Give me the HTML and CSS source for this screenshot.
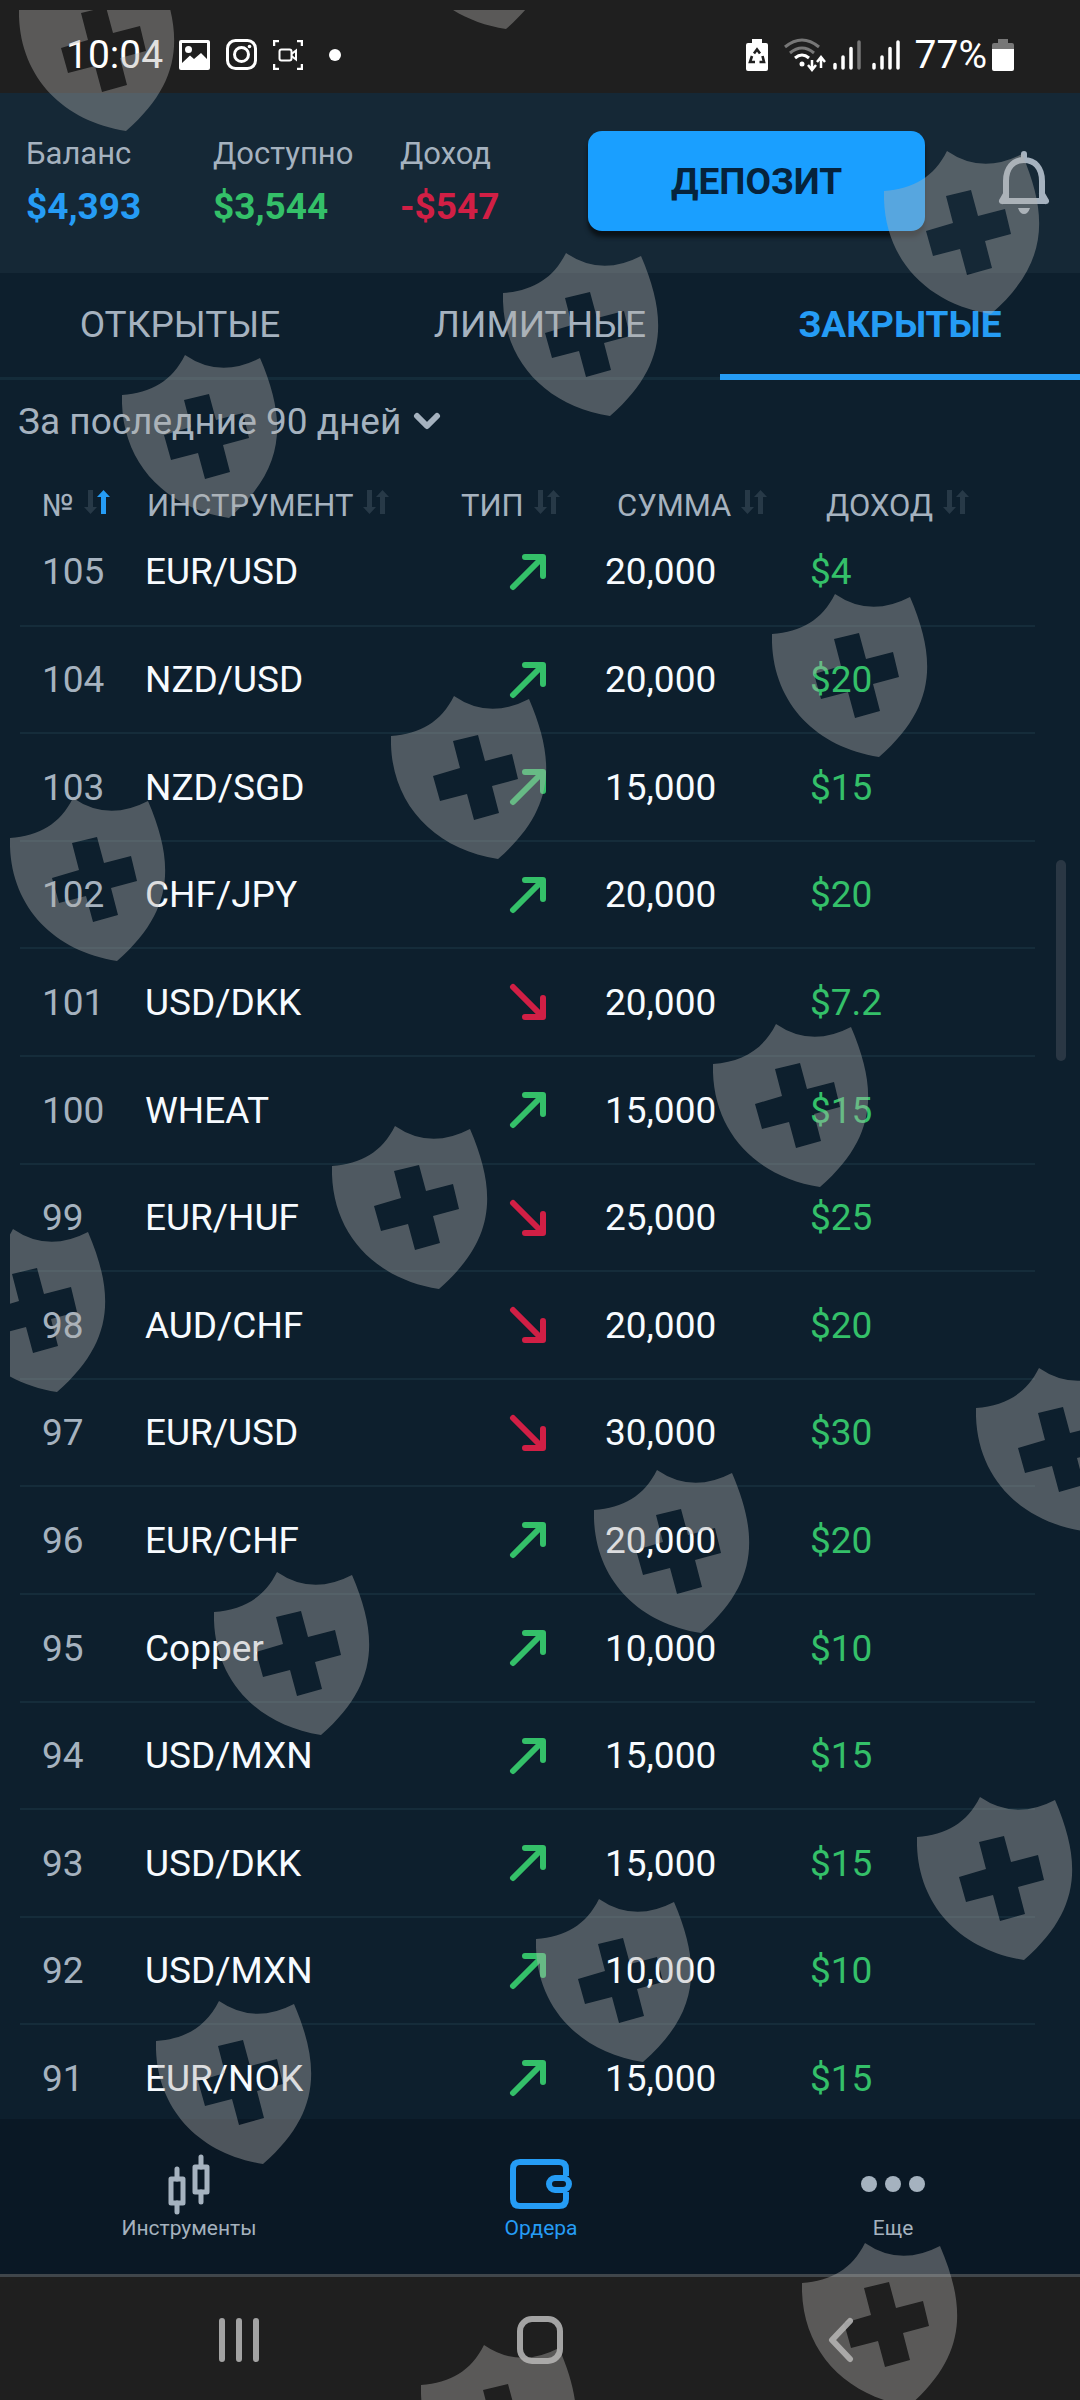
FILE: index.html
```html
<!DOCTYPE html>
<html lang="ru">
<head>
<meta charset="utf-8">
<meta name="viewport" content="width=device-width, initial-scale=1">
<title>Ордера</title>
<link rel="stylesheet" href="styles.css">
</head>
<body>
<svg class="defs" aria-hidden="true">
  <symbol id="up" viewBox="0 0 38 38"><path d="M4 34 33 5M16 4H34V23" fill="none" stroke="currentColor" stroke-width="6" stroke-linecap="round" stroke-linejoin="round"/></symbol>
  <symbol id="down" viewBox="0 0 38 38"><path d="M4 4 33 33M16 34H34V15" fill="none" stroke="currentColor" stroke-width="6" stroke-linecap="round" stroke-linejoin="round"/></symbol>
  <symbol id="sort" viewBox="0 0 28 26"><path class="sort-down" d="M5 1h5v17h4l-6.500 7L1 18h4z"/><path class="sort-up" d="M18 25h5V8h4l-6.500-7L14 8h4z"/></symbol>
  <symbol id="shield" viewBox="0 0 156 164"><path fill-rule="evenodd" d="M0 40C29 38 50 26 63 0Q98 24 138 3C165 66 164 113 107 163C42 153 -2 106 0 40ZM62 45 87 39 94 65 121 58 127 83 101 90 108 117 83 124 76 98 49 105 42 80 69 72Z"/></symbol>
</svg>
<div class="screen">
  <div class="status">
    <div class="status-left">
      <span class="clock">10:04</span>
      <svg width="31" height="30" viewBox="0 0 31 30"><path fill="#fff" fill-rule="evenodd" d="M2 0H29Q31 0 31 2V28Q31 30 29 30H2Q0 30 0 28V2Q0 0 2 0ZM3 23 11 15.500 15 19 22 13 28 19V3H3ZM9.500 6A3.500 3.500 0 1 1 9.500 13A3.500 3.500 0 1 1 9.500 6Z"/></svg>
      <svg width="31" height="31" viewBox="0 0 31 31" fill="none" stroke="#fff"><rect x="1.500" y="1.500" width="28" height="28" rx="8" stroke-width="3"/><circle cx="15.500" cy="15.500" r="7" stroke-width="3"/><circle cx="23.500" cy="7.500" r="1.800" fill="#fff" stroke="none"/></svg>
      <svg width="30" height="30" viewBox="0 0 30 30" fill="none" stroke="#fff" stroke-width="2.500"><path d="M1 6V1H6M24 1H29V6M29 24V29H24M6 29H1V24"/><rect x="6.500" y="9.500" width="12" height="11" rx="2" stroke-width="2"/><path d="M18.500 14 23 10.500V19.500L18.500 16" stroke-width="2"/></svg>
      <span class="dot"></span>
    </div>
    <div class="status-right">
      <svg width="24" height="34" viewBox="0 0 24 34"><path fill="#fff" d="M7 1H17V5H21Q23 5 23 7V31Q23 33 21 33H3Q1 33 1 31V7Q1 5 3 5H7Z"/><path d="M9 15.500 12 11.500 15 15.500M17.500 18 19 24H14.500M10 24H5L7 18" fill="none" stroke="#1f1f1f" stroke-width="2.600"/></svg>
      <svg class="wifi" width="42" height="34" viewBox="0 0 42 34" fill="none" stroke="#fff" stroke-width="3"><path stroke="#777" d="M1 9Q18-5 35 9M6 15Q18 5 30 15"/><path d="M11 20Q18 14 25 20"/><circle cx="18" cy="26" r="2.500" fill="#fff" stroke="none"/><path stroke-width="2.500" d="M28 22V31M24 27 28 32 32 27M37 30V20M33 24 37 19 41 24"/></svg>
      <svg class="signal" width="28" height="32" viewBox="0 0 28 32" stroke="#fff" stroke-width="3.500" stroke-linecap="round"><path d="M2 25.500V29M10 18V29M18 9.500V29"/><path stroke="#777" d="M26 3V29"/></svg>
      <svg class="signal" width="28" height="32" viewBox="0 0 28 32" stroke="#fff" stroke-width="3.500" stroke-linecap="round"><path d="M2 25.500V29M10 18V29M18 9.500V29M26 3V29"/></svg>
      <span class="clock percent">77%</span>
      <svg width="22" height="34" viewBox="0 0 22 34"><path fill="#777" d="M6 1H16V5H20Q22 5 22 7V12H0V7Q0 5 2 5H6Z"/><path fill="#fff" d="M0 11H22V31Q22 33 20 33H2Q0 33 0 31Z"/></svg>
    </div>
  </div>

  <header class="header">
    <dl class="stats">
      <div><dt>Баланс</dt><dd class="blue">$4,393</dd></div>
      <div><dt>Доступно</dt><dd class="green">$3,544</dd></div>
      <div><dt>Доход</dt><dd class="red">-$547</dd></div>
    </dl>
    <div class="header-actions">
      <button class="deposit" type="button">ДЕПОЗИТ</button>
      <button class="bell" type="button" aria-label="Уведомления"><svg width="52" height="66" viewBox="0 0 52 66"><path d="M8 49V31C8 18 15 10 26 10S44 18 44 31V49M4 51H48M26 4V10M8 44 4 51M44 44 48 51" fill="none" stroke="currentColor" stroke-width="6" stroke-linecap="round"/><path d="M20 58H32Q30 64 26 64T20 58Z" fill="currentColor"/></svg></button>
    </div>
  </header>

  <nav class="tabs">
    <a href="#open">ОТКРЫТЫЕ</a>
    <a href="#limit">ЛИМИТНЫЕ</a>
    <a href="#closed" class="active">ЗАКРЫТЫЕ</a>
  </nav>

  <main class="orders">
    <label class="period">
      <select aria-label="Период"><option>За последние 90 дней</option></select>
      <svg width="28" height="18" viewBox="0 0 28 18"><path d="M4 4 14 14 24 4" fill="none" stroke="currentColor" stroke-width="6" stroke-linecap="round" stroke-linejoin="round"/></svg>
    </label>
    <table>
      <colgroup><col class="c-num"><col><col class="c-type"><col class="c-sum"><col class="c-profit"></colgroup>
      <thead>
        <tr>
          <th><button type="button" class="sorted">№<svg><use href="#sort"/></svg></button></th>
          <th><button type="button">ИНСТРУМЕНТ<svg><use href="#sort"/></svg></button></th>
          <th><button type="button">ТИП<svg><use href="#sort"/></svg></button></th>
          <th><button type="button">СУММА<svg><use href="#sort"/></svg></button></th>
          <th><button type="button">ДОХОД<svg><use href="#sort"/></svg></button></th>
        </tr>
      </thead>
      <tbody>
        <tr><td>105</td><td>EUR/USD</td><td><svg class="green"><use href="#up"/></svg></td><td>20,000</td><td>$4</td></tr>
        <tr><td>104</td><td>NZD/USD</td><td><svg class="green"><use href="#up"/></svg></td><td>20,000</td><td>$20</td></tr>
        <tr><td>103</td><td>NZD/SGD</td><td><svg class="green"><use href="#up"/></svg></td><td>15,000</td><td>$15</td></tr>
        <tr><td>102</td><td>CHF/JPY</td><td><svg class="green"><use href="#up"/></svg></td><td>20,000</td><td>$20</td></tr>
        <tr><td>101</td><td>USD/DKK</td><td><svg class="red"><use href="#down"/></svg></td><td>20,000</td><td>$7.2</td></tr>
        <tr><td>100</td><td>WHEAT</td><td><svg class="green"><use href="#up"/></svg></td><td>15,000</td><td>$15</td></tr>
        <tr><td>99</td><td>EUR/HUF</td><td><svg class="red"><use href="#down"/></svg></td><td>25,000</td><td>$25</td></tr>
        <tr><td>98</td><td>AUD/CHF</td><td><svg class="red"><use href="#down"/></svg></td><td>20,000</td><td>$20</td></tr>
        <tr><td>97</td><td>EUR/USD</td><td><svg class="red"><use href="#down"/></svg></td><td>30,000</td><td>$30</td></tr>
        <tr><td>96</td><td>EUR/CHF</td><td><svg class="green"><use href="#up"/></svg></td><td>20,000</td><td>$20</td></tr>
        <tr><td>95</td><td>Copper</td><td><svg class="green"><use href="#up"/></svg></td><td>10,000</td><td>$10</td></tr>
        <tr><td>94</td><td>USD/MXN</td><td><svg class="green"><use href="#up"/></svg></td><td>15,000</td><td>$15</td></tr>
        <tr><td>93</td><td>USD/DKK</td><td><svg class="green"><use href="#up"/></svg></td><td>15,000</td><td>$15</td></tr>
        <tr><td>92</td><td>USD/MXN</td><td><svg class="green"><use href="#up"/></svg></td><td>10,000</td><td>$10</td></tr>
        <tr><td>91</td><td>EUR/NOK</td><td><svg class="green"><use href="#up"/></svg></td><td>15,000</td><td>$15</td></tr>
      </tbody>
    </table>
    <span class="scroll-thumb"></span>
  </main>

  <nav class="bottom-nav">
    <a href="#instruments"><span class="nav-icon"><svg width="42" height="62" viewBox="2 0 38 62" fill="none" stroke="currentColor" stroke-width="5" stroke-linecap="round" stroke-linejoin="round"><rect x="3" y="26" width="12" height="24"/><rect x="27" y="14" width="12" height="25"/><path d="M9 16V26M9 50V59M33 4V14M33 39V49"/></svg></span>Инструменты</a>
    <a href="#orders" class="active"><span class="nav-icon"><svg width="64" height="52" viewBox="0 0 64 52" fill="none" stroke="currentColor" stroke-width="6"><path d="M57 18V11Q57 4 50 4H11Q4 4 4 11V41Q4 48 11 48H50Q57 48 57 41V34"/><rect x="40" y="20" width="20" height="12" rx="6"/></svg></span>Ордера</a>
    <a href="#more"><span class="nav-icon"><svg width="64" height="16" viewBox="0 0 64 16" fill="currentColor"><circle cx="8" cy="8" r="8"/><circle cx="32" cy="8" r="8"/><circle cx="56" cy="8" r="8"/></svg></span>Еще</a>
  </nav>

  <div class="system-nav">
    <button type="button" aria-label="Недавние"><svg width="42" height="46" viewBox="0 0 42 46"><path d="M4 4V42M21 4V42M38 4V42"/></svg></button>
    <button type="button" aria-label="Домой"><svg width="46" height="48" viewBox="0 0 46 48"><rect x="3" y="3" width="40" height="42" rx="12"/></svg></button>
    <button type="button" aria-label="Назад"><svg width="26" height="46" viewBox="0 0 26 46"><path d="M22 4 4 23 22 42"/></svg></button>
  </div>

  <svg class="watermark" aria-hidden="true">
    <g transform="translate(-10 -10)">
      <use href="#shield" x="19" y="-32" width="156" height="164"/>
      <use href="#shield" x="399" y="-134" width="156" height="164"/>
      <use href="#shield" x="884" y="151" width="156" height="164"/>
      <use href="#shield" x="503" y="253" width="156" height="164"/>
      <use href="#shield" x="122" y="355" width="156" height="164"/>
      <use href="#shield" x="772" y="594" width="156" height="164"/>
      <use href="#shield" x="391" y="696" width="156" height="164"/>
      <use href="#shield" x="10" y="798" width="156" height="164"/>
      <use href="#shield" x="713" y="1024" width="156" height="164"/>
      <use href="#shield" x="332" y="1126" width="156" height="164"/>
      <use href="#shield" x="-50" y="1229" width="156" height="164"/>
      <use href="#shield" x="976" y="1368" width="156" height="164"/>
      <use href="#shield" x="594" y="1470" width="156" height="164"/>
      <use href="#shield" x="214" y="1572" width="156" height="164"/>
      <use href="#shield" x="917" y="1797" width="156" height="164"/>
      <use href="#shield" x="536" y="1899" width="156" height="164"/>
      <use href="#shield" x="156" y="2001" width="156" height="164"/>
      <use href="#shield" x="802" y="2243" width="156" height="164"/>
      <use href="#shield" x="421" y="2345" width="156" height="164"/>
    </g>
  </svg>
</div>
</body>
</html>
```
FILE: styles.css
```css
* { box-sizing: border-box; }
body { margin: 0; background: #0d1f2d; color: #a5b2bf; font-family: Roboto, "Liberation Sans", sans-serif; }
button, select { font: inherit; color: inherit; background: none; border: 0; margin: 0; padding: 0; }
a { color: inherit; text-decoration: none; }
svg { display: block; flex: none; }
.defs { position: absolute; width: 0; height: 0; }
.blue { color: #259cf5; }
.green { color: #34c069; }
.red { color: #d11f45; }

.screen { position: relative; display: flex; flex-direction: column; height: 100vh; overflow: hidden; }

.status { display: flex; justify-content: space-between; align-items: center; height: 93px; padding: 16px 66px 0; background: #1f1f1f; color: #fff; }
.status-left { display: flex; align-items: center; gap: 16px; }
.status-right { display: flex; align-items: center; gap: 7px; }
.clock { font-size: 39px; line-height: 44px; }
.percent { margin: 0 -2px 0 4px; }
.dot { width: 12px; height: 12px; margin-left: 10px; border-radius: 50%; background: #fff; }
.wifi { margin-left: 8px; }
.signal { margin-right: 4px; }

.header { display: flex; justify-content: space-between; height: 180px; padding: 39px 30px 0 26px; background: #152836; }
.stats { display: flex; margin: 0; }
.stats div { width: 187px; }
.stats dt { font-size: 31px; line-height: 44px; }
.stats dd { margin: 4px 0 0; font-size: 37px; font-weight: 700; line-height: 54px; }
.header-actions { display: flex; align-items: flex-start; gap: 73px; }
.deposit { width: 337px; height: 100px; margin-top: -1px; border-radius: 14px; background: #1a9fff; box-shadow: 0 6px 4px #0a1218; color: #06233c; font-size: 37px; font-weight: 700; }
.bell { margin-top: 18px; }

.tabs { display: flex; height: 107px; border-bottom: 3px solid #142c3a; font-size: 37px; }
.tabs a { flex: 1; display: flex; justify-content: center; padding-top: 31px; line-height: 42px; }
.tabs .active { margin-bottom: -3px; border-bottom: 6px solid #259cf5; color: #259cf5; font-weight: 700; }

.orders { position: relative; flex: 1; min-height: 0; overflow: hidden; padding: 20px 45px 0 20px; }
.period { display: flex; align-items: center; gap: 11px; width: max-content; margin-left: -2px; }
.period select { appearance: none; height: 42px; font-size: 37px; }
table { width: 100%; border-collapse: collapse; table-layout: fixed; }
.c-num { width: 125px; }
.c-type { width: 150px; }
.c-sum { width: 205px; }
.c-profit { width: 225px; }
th { height: 76px; padding: 0 0 0 2px; vertical-align: bottom; text-align: left; font-size: 31px; font-weight: 400; line-height: 24px; }
th:first-child { padding-left: 22px; }
th:nth-child(3) { padding-left: 6px; }
th:nth-child(4) { padding-left: 12px; }
th:nth-child(5) { padding-left: 16px; }
th button { display: flex; align-items: flex-end; gap: 9px; }
th svg { width: 28px; height: 26px; margin-bottom: 3px; fill: #273947; }
.sorted { --up: #259cf5; }
.sort-up { fill: var(--up, #273947); }
td { height: 108px; padding: 0; border-bottom: 2px solid #152c3a; color: #f7fbff; font-size: 37px; }
tr:nth-child(5n + 2) td, tr:nth-child(5n + 4) td { height: 107px; }
td:first-child { padding-left: 22px; color: #a5b2bf; }
td:nth-child(3) { padding-left: 54px; }
td:nth-child(5) { color: #34c069; }
td svg { width: 38px; height: 38px; }
.scroll-thumb { position: absolute; top: 480px; right: 14px; width: 10px; height: 201px; border-radius: 5px; background: #2a3744; }

.bottom-nav { display: flex; height: 158px; padding: 31px 11px 0 13px; background: #0a1825; border-bottom: 3px solid #40464b; font-size: 21px; line-height: 20px; }
.bottom-nav a { flex: 1; display: flex; flex-direction: column; align-items: center; }
.bottom-nav .active { color: #259cf5; }
.nav-icon { display: flex; align-items: center; height: 68px; }

.system-nav { display: flex; height: 123px; padding: 2px 88px 0; background: #1f1f1f; }
.system-nav button { flex: 1; display: flex; align-items: center; justify-content: center; }
.system-nav svg { fill: none; stroke: #a3a3a3; stroke-width: 6; stroke-linecap: round; stroke-linejoin: round; }

.watermark { position: absolute; inset: 10px 0 0 10px; width: calc(100% - 10px); height: calc(100% - 10px); overflow: hidden; pointer-events: none; fill: rgba(180, 178, 176, .4); }
```
